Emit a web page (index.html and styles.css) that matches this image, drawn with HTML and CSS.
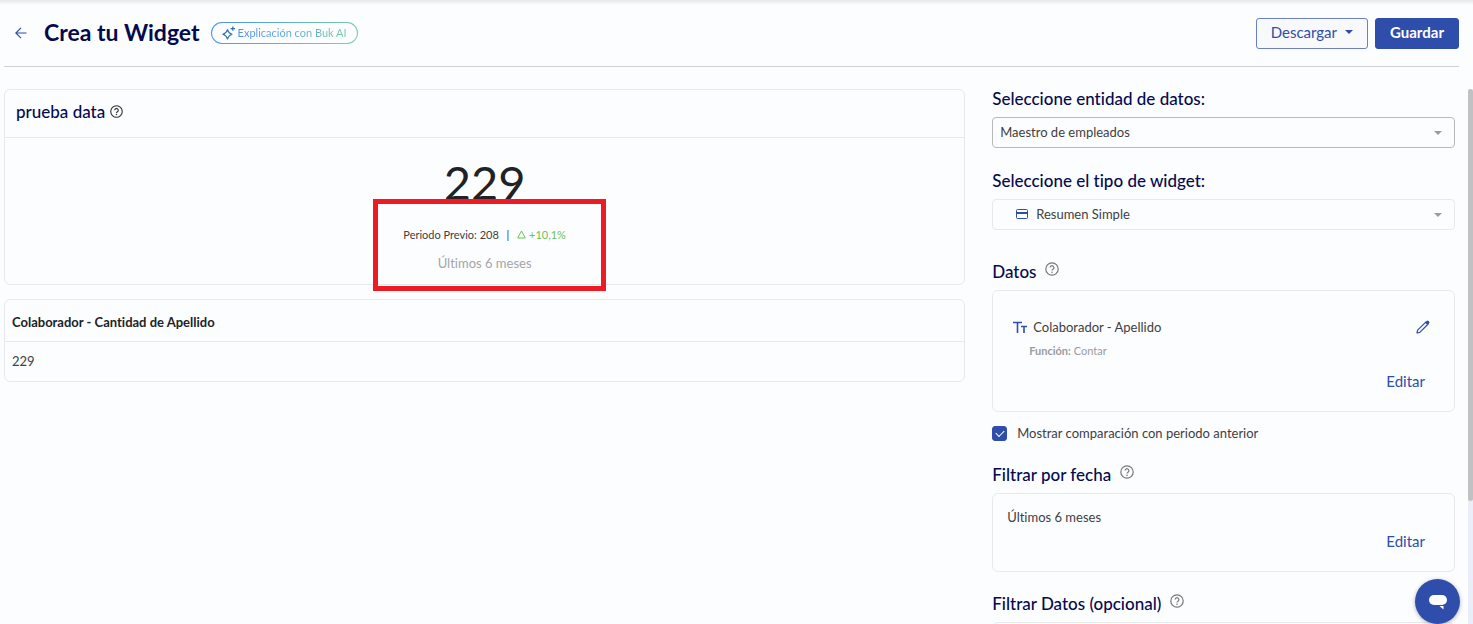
FILE: index.html
```
<!DOCTYPE html>
<html lang="es">
<head>
  <meta charset="UTF-8">
  <meta name="viewport" content="width=device-width, initial-scale=1.0">
  <title>Crea tu Widget</title>
  <link rel="stylesheet" href="styles.css">
</head>
<body>
  <svg class="sprite" aria-hidden="true">
    <defs>
      <linearGradient id="ai-gradient" x1="0" y1="0" x2="1" y2="1">
        <stop offset="0" stop-color="#2f62c9"/>
        <stop offset="1" stop-color="#3f8f8f"/>
      </linearGradient>
      <symbol id="icon-help" viewBox="0 0 14 14">
        <circle cx="7" cy="7" r="6.2" fill="none" stroke="currentColor" stroke-width="1.2"/>
        <path d="M5.1 5.6a1.9 1.9 0 1 1 2.9 1.6c-.7.45-1 .75-1 1.4" fill="none" stroke="currentColor" stroke-width="1.2"/>
        <circle cx="7" cy="10.2" r=".8" fill="currentColor"/>
      </symbol>
      <symbol id="icon-caret" viewBox="0 0 8 4">
        <path d="M0 0h8L4 4z" fill="currentColor"/>
      </symbol>
    </defs>
  </svg>

  <header class="topbar">
    <a href="#" class="back" aria-label="Volver">
      <svg width="12" height="12" viewBox="0 0 12 12"><path d="M11.5 6H1M6 .8L.8 6 6 11.2" fill="none" stroke="currentColor" stroke-width="1.2"/></svg>
    </a>
    <h1>Crea tu Widget</h1>
    <button type="button" class="ai-button">
      <svg width="13" height="14" viewBox="0 0 13 14" fill="none" stroke="url(#ai-gradient)" stroke-width="1.2" stroke-linejoin="round">
        <path d="M5.5 3.600C6.200 6.300 7.200 7.300 10 8.300C7.200 9.300 6.200 10.300 5.500 13.200C4.800 10.300 3.700 9.300 .9 8.300C3.700 7.300 4.800 6.300 5.500 3.600z"/>
        <path d="M10.800 .4v4.400M8.600 2.600H13" stroke="#2f6fae"/>
      </svg>
      <span>Explicación con Buk AI</span>
    </button>
    <div class="actions">
      <button type="button" class="btn btn-outline">Descargar <svg width="8" height="4"><use href="#icon-caret"/></svg></button>
      <button type="button" class="btn btn-primary">Guardar</button>
    </div>
  </header>

  <main class="layout">
    <section class="preview">
      <article class="card">
        <div class="card-header">
          <h2>prueba data</h2>
          <svg class="help dark" width="13" height="13"><use href="#icon-help"/></svg>
        </div>
        <div class="summary">
          <p class="value">229</p>
          <p class="compare">Periodo Previo: 208 <span class="divider">|</span>
            <span class="up"><svg width="9" height="9" viewBox="0 0 9 9"><path d="M4.500 1L8.300 8H.7z" fill="none" stroke="currentColor"/></svg> +10,1%</span>
          </p>
          <p class="period">Últimos 6 meses</p>
          <div class="highlight"></div>
        </div>
      </article>

      <div class="card">
        <table>
          <thead>
            <tr><th>Colaborador - Cantidad de Apellido</th></tr>
          </thead>
          <tbody>
            <tr><td>229</td></tr>
          </tbody>
        </table>
      </div>
    </section>

    <aside class="settings">
      <div class="field">
        <label for="entity">Seleccione entidad de datos:</label>
        <div class="select">
          <select id="entity"><option>Maestro de empleados</option></select>
          <svg class="caret" width="8" height="4"><use href="#icon-caret"/></svg>
        </div>
      </div>

      <div class="field">
        <label for="type">Seleccione el tipo de widget:</label>
        <div class="select select-light">
          <svg class="type-icon" width="12" height="10" viewBox="0 0 12 10"><rect x=".5" y=".5" width="11" height="9" rx="1" fill="none" stroke="currentColor"/><path d="M0 3h12v2H0z" fill="currentColor"/></svg>
          <select id="type" class="with-icon"><option>Resumen Simple</option></select>
          <svg class="caret" width="8" height="4"><use href="#icon-caret"/></svg>
        </div>
      </div>

      <section class="group group-data">
        <h3>Datos <svg class="help" width="14" height="14"><use href="#icon-help"/></svg></h3>
        <div class="card box box-data">
          <div class="data-row">
            <svg width="14" height="12" viewBox="0 0 14 12"><path d="M0 1.500h9M4.500 1.500V12M8 5.500h6M11 5.500V12" fill="none" stroke="currentColor" stroke-width="1.600"/></svg>
            <span class="data-name">Colaborador - Apellido</span>
            <button type="button" class="icon-button" aria-label="Editar campo">
              <svg width="14" height="14" viewBox="0 0 14 14"><path d="M1 13l.6-2.800L10 1.800l2.200 2.200L3.800 12.400z" fill="none" stroke="currentColor" stroke-width="1.200" stroke-linejoin="round"/><path d="M9 2.600L10.800.9a1.300 1.300 0 0 1 1.800 0l.5.5a1.300 1.300 0 0 1 0 1.800L11.400 5z" fill="currentColor"/></svg>
            </button>
          </div>
          <p class="function"><b>Función:</b> Contar</p>
          <button type="button" class="edit">Editar</button>
        </div>
        <label class="check"><input type="checkbox" checked> Mostrar comparación con periodo anterior</label>
      </section>

      <section class="group">
        <h3>Filtrar por fecha <svg class="help" width="14" height="14"><use href="#icon-help"/></svg></h3>
        <div class="card box box-date">
          <p>Últimos 6 meses</p>
          <button type="button" class="edit">Editar</button>
        </div>
      </section>

      <section class="group">
        <h3>Filtrar Datos (opcional) <svg class="help" width="14" height="14"><use href="#icon-help"/></svg></h3>
        <div class="card box"></div>
      </section>
    </aside>

    <div class="scrollbar"><div class="thumb"></div></div>
  </main>

  <button type="button" class="chat" aria-label="Abrir chat">
    <svg width="20" height="16" viewBox="0 0 20 16"><rect x="1" y="1" width="18" height="10" rx="5" fill="#fff"/><path d="M11.500 12h4v3.500z" fill="#fff"/></svg>
  </button>
</body>
</html>
```
FILE: styles.css
```
* {
  box-sizing: border-box;
}
body {
  margin: 0;
  height: 100vh;
  display: flex;
  flex-direction: column;
  overflow: hidden;
  background: linear-gradient(#e6e7e9, #fcfdff 5px);
  color: #3f4042;
  font-family: Lato, "Noto Sans", sans-serif;
  font-size: 13px;
  font-variant-ligatures: none;
  line-height: 20px;
}
h1, h2, h3, p {
  margin: 0;
}
button, select {
  font: inherit;
  cursor: pointer;
}
.sprite {
  position: absolute;
  width: 0;
  height: 0;
}

/* top bar */
.topbar {
  display: flex;
  align-items: center;
  height: 67px;
  flex-shrink: 0;
  margin: 0 14px 0 4px;
  padding: 0 0 0 11px;
  border-bottom: 1px solid #cfd0d2;
}
.back {
  display: flex;
  color: #2f4daa;
}
h1 {
  margin-left: 17px;
  padding-bottom: 2px;
  font-size: 23px;
  line-height: 30px;
  color: #050a4e;
}
.ai-button {
  display: flex;
  align-items: center;
  gap: 3px;
  height: 22px;
  margin-left: 11px;
  padding: 0 10px 1px;
  border: 1px solid transparent;
  border-radius: 11px;
  background: linear-gradient(#fcfdff, #fcfdff) padding-box, linear-gradient(135deg, #4b8df8, #7fd49a) border-box;
  font-size: 11px;
}
.ai-button span {
  background: linear-gradient(90deg, #4b8df8, #76c9a4);
  -webkit-background-clip: text;
  background-clip: text;
  color: transparent;
}
.actions {
  display: flex;
  gap: 7px;
  margin-left: auto;
}
.btn {
  display: flex;
  align-items: center;
  gap: 8px;
  height: 31px;
  padding: 0 14px 2px;
  border: 1px solid #2f4daa;
  border-radius: 3px;
  font-size: 15px;
}
.btn-outline {
  background: #f8f9fb;
  border-color: #6a7fc8;
  color: #2f4daa;
}
.btn-primary {
  background: #2f4daa;
  color: #fff;
  font-weight: bold;
}

.layout {
  flex: 1;
  min-height: 0;
  display: flex;
  padding: 22px 0 0 4px;
}

/* preview */
.preview {
  flex: 27;
  display: flex;
  flex-direction: column;
  gap: 14px;
}
.card {
  border: 1px solid #e8e9ec;
  border-radius: 6px;
}
.card-header {
  display: flex;
  align-items: center;
  gap: 5px;
  height: 48px;
  padding: 0 11px 4px;
  border-bottom: 1px solid #e8e9ec;
}
h2, h3, .field label {
  font-size: 17px;
  font-weight: 500;
  line-height: 20px;
  color: #050a4e;
}
.help {
  color: #77787b;
}
.help.dark {
  color: #333;
}
.summary {
  position: relative;
  display: flex;
  flex-direction: column;
  align-items: center;
  gap: 8px;
  padding: 19px 0 11px;
}
.value {
  font-size: 47px;
  line-height: 50px;
  color: #212225;
}
.compare {
  margin-top: 10px;
  font-size: 11px;
}
.divider {
  margin: 0 5px;
}
.up {
  color: #6dbf56;
}
.period {
  color: #a4a5a7;
}
.highlight {
  position: absolute;
  top: 61px;
  left: calc(50% - 112px);
  width: 233px;
  height: 92px;
  border: 5px solid #ed1c24;
}
table {
  width: 100%;
  border-collapse: collapse;
}
th, td {
  padding: 9px 7px 10px;
  text-align: left;
}
th {
  padding-top: 12px;
  padding-bottom: 9px;
  border-bottom: 1px solid #e8e9ec;
  color: #212225;
}

/* settings */
.settings {
  flex: 13;
  display: flex;
  flex-direction: column;
  margin: 0 13px 0 27px;
  overflow: hidden;
}
.field {
  display: flex;
  flex-direction: column;
  gap: 8px;
  margin-bottom: 23px;
}
.select {
  position: relative;
}
.select select {
  display: block;
  width: 100%;
  height: 31px;
  padding: 0 7px 2px;
  appearance: none;
  border: 1px solid #b8b9bb;
  border-radius: 4px;
  background: #fcfdff;
  color: inherit;
}
.select-light select {
  border-color: #e8e9ec;
}
.select .with-icon {
  padding-left: 43px;
}
.caret {
  position: absolute;
  right: 13px;
  top: 14px;
  color: #9a9b9d;
}
.type-icon {
  position: absolute;
  left: 24px;
  top: 10px;
  color: #2f4daa;
}
.group {
  margin-top: 22px;
}
.group-data {
  margin-top: 9px;
}
h3 {
  display: flex;
  gap: 9px;
  margin-bottom: 8px;
}
.box {
  display: flex;
  flex-direction: column;
  flex-shrink: 0;
  padding: 13px 20px;
}
.box-data {
  padding-top: 26px;
}
.box-date {
  gap: 4px;
  padding-left: 14px;
}
.data-row {
  display: flex;
  align-items: center;
  gap: 6px;
  color: #2f4daa;
}
.data-name {
  flex: 1;
  color: #3f4042;
}
.icon-button, .edit {
  display: flex;
  padding: 0;
  border: none;
  background: none;
  color: #2f4daa;
}
.icon-button {
  margin-right: 4px;
}
.function {
  margin: 4px 0 10px 16px;
  font-size: 11px;
  color: #9a9b9d;
}
.edit {
  align-self: flex-end;
  margin: 0 9px 7px 0;
  font-size: 15px;
}
.check {
  display: flex;
  align-items: center;
  gap: 10px;
  margin: 11px 0 0;
}
.check input {
  display: flex;
  align-items: center;
  justify-content: center;
  width: 15px;
  height: 15px;
  margin: 0;
  appearance: none;
  border: 1px solid #2f4daa;
  border-radius: 3px;
}
.check input:checked {
  background: #2f4daa;
}
.check input:checked::before {
  content: "";
  width: 7px;
  height: 4px;
  margin-bottom: 2px;
  border: solid #fff;
  border-width: 0 0 1px 1px;
  transform: rotate(-45deg);
}
.scrollbar {
  width: 5px;
  background: #e9eef8;
}
.thumb {
  height: 77%;
  border-radius: 3px;
  background: #c1c1c3;
}
.chat {
  position: fixed;
  right: 13px;
  bottom: 0;
  display: flex;
  align-items: center;
  justify-content: center;
  width: 45px;
  height: 45px;
  padding: 0;
  border: none;
  border-radius: 50%;
  background: #2f4daa;
  box-shadow: 0 1px 4px rgba(0, 0, 0, 0.3);
}
```
